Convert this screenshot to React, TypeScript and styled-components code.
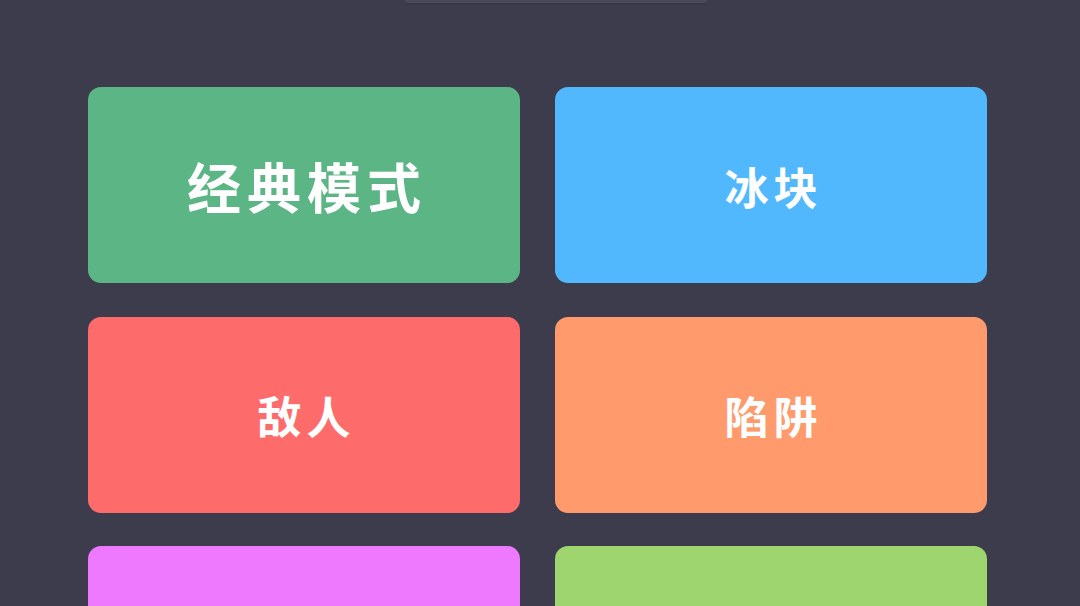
import React from 'react';
import styled, { createGlobalStyle } from 'styled-components';

const GlobalStyle = createGlobalStyle`
  html, body {
    margin: 0;
    padding: 0;
    background: #3d3c4d;
    overflow: hidden;
  }
  body {
    font-family: "Noto Sans CJK SC", "Noto Sans", sans-serif;
  }
`;

const Page = styled.div`
  width: 1080px;
  height: 606px;
  background: #3d3c4d;
  overflow: hidden;
`;

const TopEdge = styled.div`
  width: 302px;
  height: 3px;
  margin-left: 405px;
  background: #4a4959;
  border-radius: 0 0 3px 3px;
  box-shadow: 0 1px 2px rgba(0, 0, 0, 0.15);
`;

const ModeGrid = styled.div`
  display: grid;
  grid-template-columns: 432px 432px;
  grid-auto-rows: 196px;
  column-gap: 35px;
  row-gap: 33.5px;
  margin: 84px 0 0 88px;
`;

const ModeCard = styled.div<{ bg: string }>`
  display: flex;
  align-items: center;
  justify-content: center;
  background: ${props => props.bg};
  border-radius: 13px;
  cursor: pointer;
`;

const ModeLabel = styled.span<{ big?: boolean }>`
  color: #ffffff;
  font-weight: 700;
  font-size: ${props => (props.big ? '54px' : '44px')};
  letter-spacing: ${props => (props.big ? '6px' : '5px')};
  line-height: 1;
  margin-top: ${props => (props.big ? '2px' : '1px')};
  margin-left: ${props => (props.big ? '6px' : '5px')};
`;

const modes = [
  { label: '经典模式', color: '#5cb584', big: true },
  { label: '冰块', color: '#52b8fd' },
  { label: '敌人', color: '#fe6b6b' },
  { label: '陷阱', color: '#fe9a6c' },
  { label: '', color: '#ee79fe' },
  { label: '', color: '#9ed56f' },
];

const App: React.FC = () => {
  return (
    <Page>
      <GlobalStyle />
      <TopEdge />
      <ModeGrid>
        {modes.map((m, i) => (
          <ModeCard key={i} bg={m.color}>
            {m.label && <ModeLabel big={m.big}>{m.label}</ModeLabel>}
          </ModeCard>
        ))}
      </ModeGrid>
    </Page>
  );
};

export default App;
